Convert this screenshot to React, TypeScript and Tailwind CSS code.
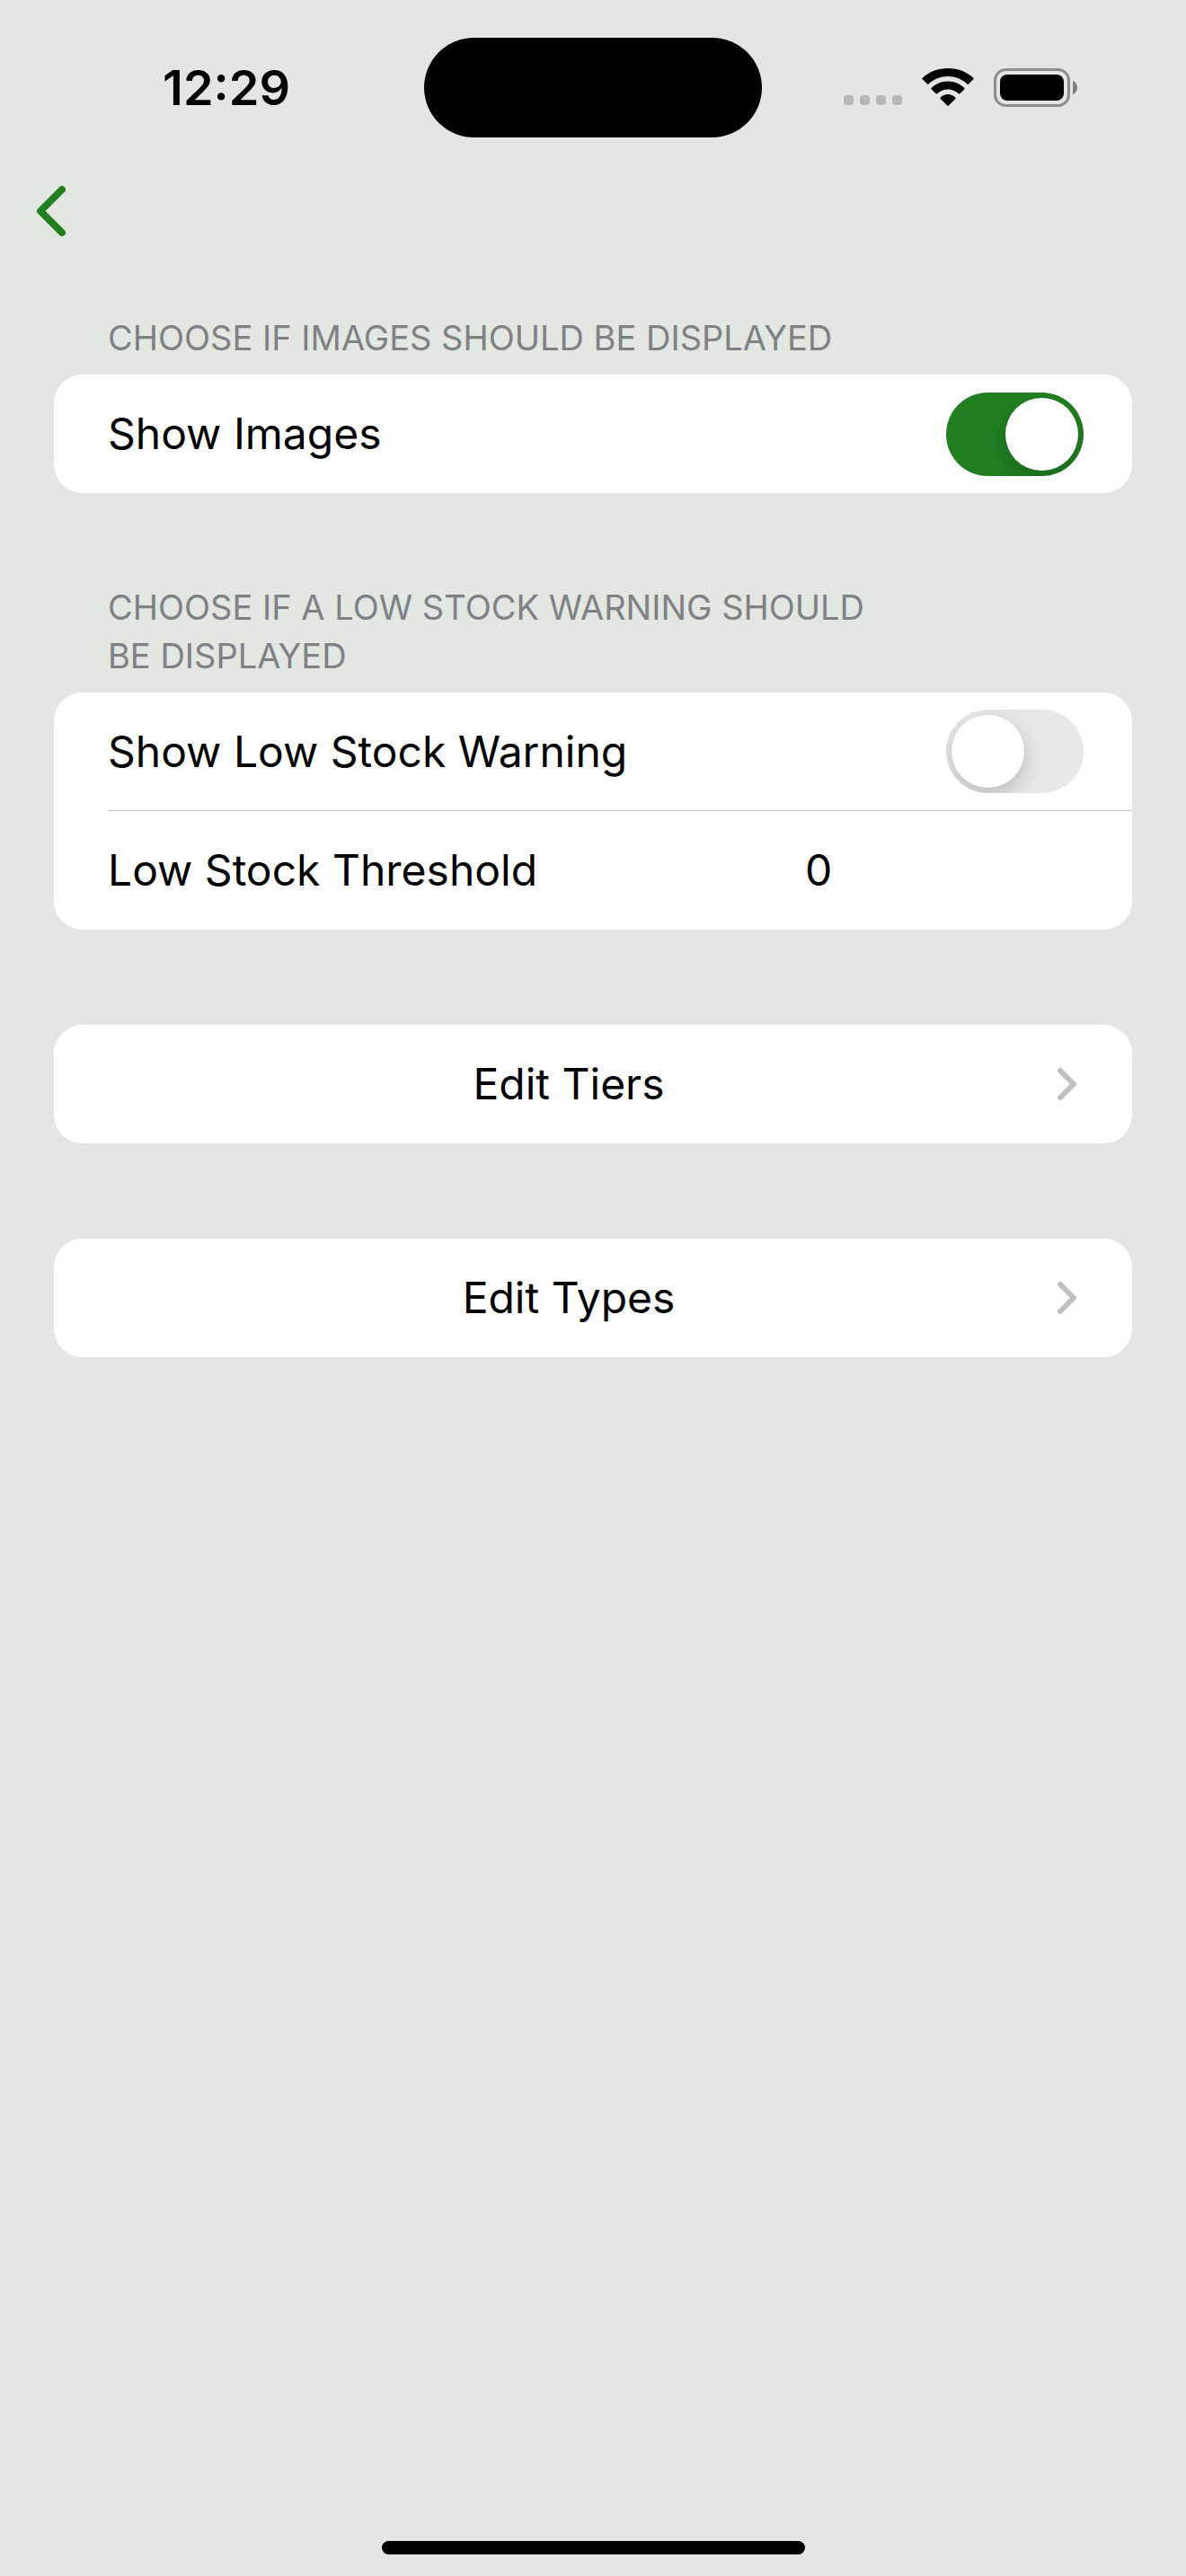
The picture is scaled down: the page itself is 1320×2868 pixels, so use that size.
import { useId, useState, type ReactNode } from 'react';
import clsx from 'clsx';

function WifiIcon() {
  return (
    <svg width="58" height="43" viewBox="0 0 58 43" fill="black" aria-hidden="true">
      <path d="M29 9C37.3 9 44.8 12.2 50.4 17.5C50.9 18 51.6 18 52 17.5L57.3 12.3C57.8 11.9 57.8 11.2 57.3 10.8C50 3.9 39.9 0 29 0S8 3.9.7 10.8C.2 11.2.2 11.9.7 12.3L6 17.5C6.4 18 7.1 18 7.6 17.5C13.2 12.2 20.7 9 29 9Z" />
      <path d="M29 23.5C33.5 23.5 37.7 25.2 40.9 28.2C41.3 28.6 42 28.6 42.4 28.2L47.2 23.4C47.7 22.9 47.7 22.2 47.2 21.8C42.5 17.3 36 14.5 29 14.5S15.500 17.300 10.800 21.800C10.300 22.200 10.300 22.900 10.800 23.400L15.600 28.200C16 28.600 16.700 28.600 17.100 28.200C20.300 25.200 24.500 23.500 29 23.500Z" />
      <path d="M37.300 32.400C37.700 32.800 37.700 33.400 37.300 33.900L29.800 41.500C29.300 42 28.700 42 28.200 41.500L20.700 33.900C20.300 33.400 20.300 32.800 20.700 32.400C22.900 30.300 25.800 29 29 29S35.100 30.300 37.300 32.400Z" />
    </svg>
  );
}

function BatteryIcon() {
  return (
    <svg width="94" height="43" viewBox="0 0 94 43" aria-hidden="true">
      <rect x="1.500" y="1.500" width="82" height="40" rx="12" fill="none" stroke="#8b8e8b" strokeWidth="3" />
      <rect x="7" y="7" width="71" height="29" rx="8" fill="black" />
      <path d="M88 14C91 15 93 18 93 21.500S91 28 88 29Z" fill="#7d807d" />
    </svg>
  );
}

function StatusBar() {
  return (
    <div className="grid h-[153px] grid-cols-3 items-end">
      <div className="flex h-[111px] items-center justify-center pl-16">
        <time className="text-[54px] leading-none font-semibold">12:29</time>
      </div>
      <div className="mx-auto h-[111px] w-[376px] rounded-full bg-black" />
      <div className="flex h-[111px] items-center justify-end pr-[120px]">
        <div className="mr-[22px] flex gap-[7px] pt-7">
          {[0, 1, 2, 3].map((dot) => (
            <span key={dot} className="size-[11px] rounded-[4px] bg-[#b4b9b5]" />
          ))}
        </div>
        <span className="mr-[22px]">
          <WifiIcon />
        </span>
        <BatteryIcon />
      </div>
    </div>
  );
}

function Section({ title, children }: { title?: string; children: ReactNode }) {
  return (
    <section className={title ? 'mt-[100px] first:mt-0' : 'mt-[106px]'}>
      {title && (
        <h2 className="mb-[14px] max-w-[1020px] px-[60px] text-[38px] leading-[54px] text-[#808185] uppercase">
          {title}
        </h2>
      )}
      <div className="overflow-hidden rounded-[32px] bg-white">{children}</div>
    </section>
  );
}

function ToggleRow({ label, initial, divided }: { label: string; initial: boolean; divided?: boolean }) {
  const id = useId();
  const [on, setOn] = useState(initial);
  return (
    <div
      className={clsx(
        'ml-[60px] flex h-[132px] items-center justify-between pr-[54px]',
        divided && 'border-b border-[#c4c4c6]',
      )}
    >
      <label htmlFor={id}>{label}</label>
      <input
        id={id}
        type="checkbox"
        role="switch"
        checked={on}
        onChange={(e) => setOn(e.target.checked)}
        className="flex h-[93px] w-[153px] cursor-pointer appearance-none items-center overflow-hidden rounded-full bg-[#e8e8ea] px-[6px] before:size-[81px] before:rounded-full before:bg-white before:shadow-[0_9px_24px_rgba(0,0,0,0.2)] checked:justify-end checked:bg-[#217f21]"
      />
    </div>
  );
}

function NumberRow({ label, initial }: { label: string; initial: string }) {
  const id = useId();
  const [value, setValue] = useState(initial);
  return (
    <div className="flex h-[132px] items-center gap-6 px-[60px]">
      <label htmlFor={id}>{label}</label>
      <input
        id={id}
        type="text"
        inputMode="numeric"
        value={value}
        onChange={(e) => setValue(e.target.value)}
        className="min-w-0 flex-1 bg-transparent text-center outline-none"
      />
    </div>
  );
}

function LinkRow({ label }: { label: string }) {
  return (
    <a href="#" className="flex h-[132px] items-center px-[60px]">
      <span className="flex-1 text-center">{label}</span>
      <span className="ml-[30px]">
        <svg width="24" height="38" viewBox="0 0 24 38" fill="none" aria-hidden="true">
          <path d="M4 4L19 19L4 34" stroke="#c0c0c1" strokeWidth="6" strokeLinecap="round" strokeLinejoin="round" />
        </svg>
      </span>
    </a>
  );
}

export default function App() {
  return (
    <div className="flex min-h-screen flex-col bg-[#e2e7e1] font-[Inter,sans-serif] text-[48px] leading-[66px] text-black">
      <StatusBar />
      <header className="flex h-[164px] items-center px-[37px]">
        <button type="button" aria-label="Back" className="cursor-pointer">
          <svg width="38" height="60" viewBox="0 0 38 60" fill="none" aria-hidden="true">
            <path d="M32 6L8 30L32 54" stroke="#217f21" strokeWidth="8" strokeLinecap="round" strokeLinejoin="round" />
          </svg>
        </button>
      </header>
      <main className="px-[60px] pt-8">
        <Section title="Choose if images should be displayed">
          <ToggleRow label="Show Images" initial={true} />
        </Section>
        <Section title="Choose if a low stock warning should be displayed">
          <ToggleRow label="Show Low Stock Warning" initial={false} divided />
          <NumberRow label="Low Stock Threshold" initial="0" />
        </Section>
        <Section>
          <LinkRow label="Edit Tiers" />
        </Section>
        <Section>
          <LinkRow label="Edit Types" />
        </Section>
      </main>
      <div className="mx-auto mt-auto mb-6 h-[15px] w-[471px] rounded-full bg-black" />
    </div>
  );
}
